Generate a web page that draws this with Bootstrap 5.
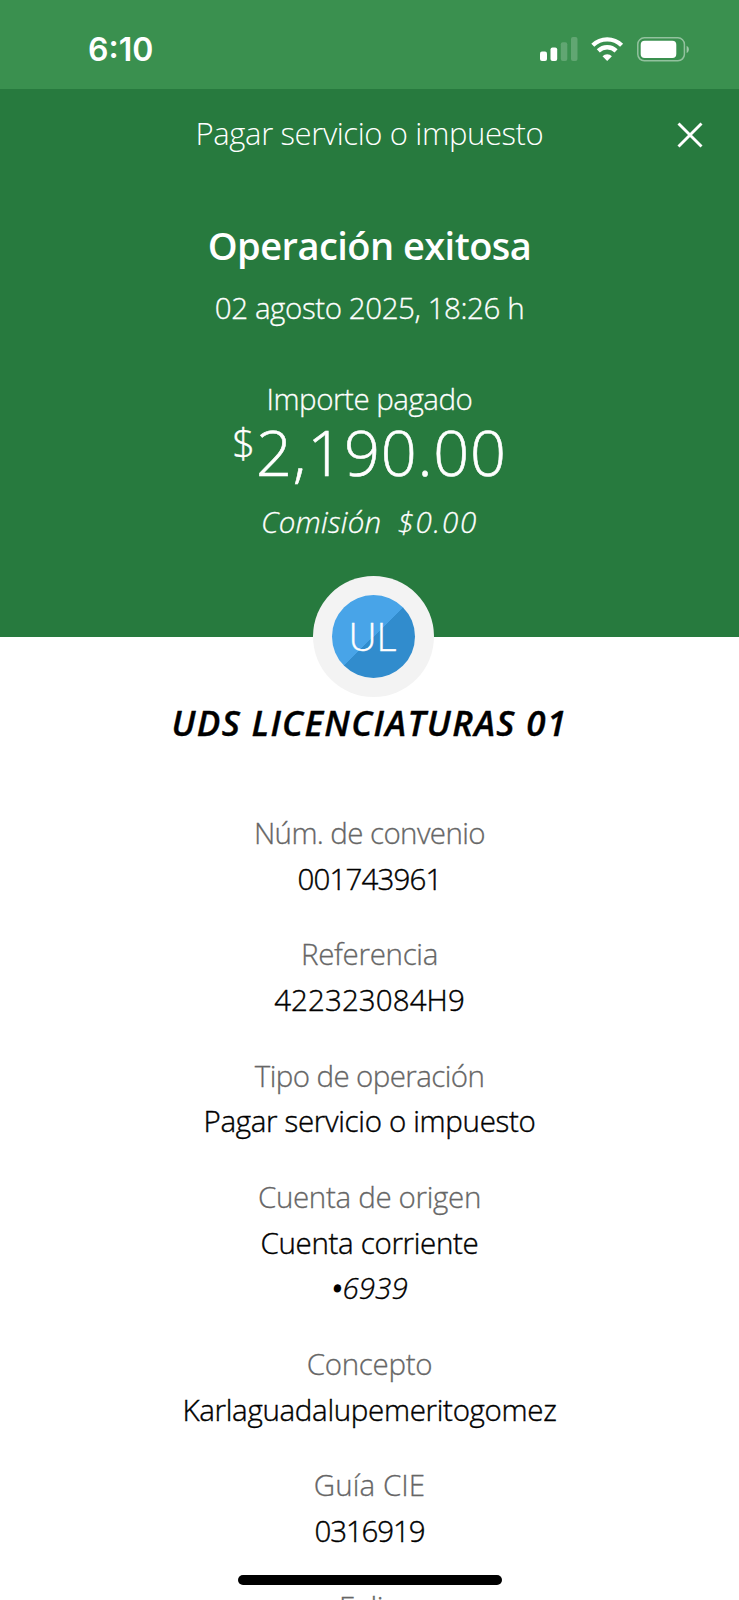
<!DOCTYPE html>
<html lang="es">
<head>
<meta charset="utf-8">
<meta name="viewport" content="width=device-width, initial-scale=1">
<title>Operación exitosa</title>
<link rel="stylesheet" href="https://cdn.jsdelivr.net/npm/bootstrap@5.3.0/dist/css/bootstrap.min.css">
<style>
  body { font-family: "Open Sans", sans-serif; font-weight: 300; font-size: 29.5px; color: #000; background: #fff; }
  .screen { height: 1600px; }
  .status-bar { height: 89px; background: #3a904f; padding: 0 50px 0 88px; }
  .clock { font: 600 32px/1 "Inter", sans-serif; letter-spacing: 0; padding-top: 34px; }
  .status-icons { padding-top: 36px; }
  .hero { height: 548px; background: #277a3e; }
  .title-bar { height: 87px; font-size: 31px; letter-spacing: -.38px; padding-top: 1px; }
  .close-btn { right: 35px; top: 32px; }
  .headline { font-size: 38px; font-weight: 600; line-height: 50px; letter-spacing: -.54px; margin-top: 44px; }
  .line { line-height: 46px; -webkit-text-stroke: .3px #fff; }
  .stamp { letter-spacing: -.42px; margin-top: 15px; }
  .caption-paid { letter-spacing: -.48px; margin-top: 45px; }
  .amount { font-size: 63px; line-height: 60px; letter-spacing: .81px; -webkit-text-stroke: .6px #fff; }
  .amount .currency { font-size: 40px; line-height: 40px; margin: 1px 1px 0 0; letter-spacing: 0; -webkit-text-stroke: .4px #fff; }
  .fee { margin-top: 17px; gap: 16px; letter-spacing: .25px; }
  .fee-value { letter-spacing: 1.8px; }
  .avatar { left: 313px; top: 576px; width: 121px; height: 121px; background: #f3f3f3; }
  .avatar-disc { width: 83px; height: 83px; font-size: 39px; line-height: 1; padding: 0 2px 2px 0; background: linear-gradient(136deg, #48a4e8 50%, #318ccd 50%); -webkit-text-stroke: .4px #fff; }
  .payee { font-size: 35px; font-weight: 600; line-height: 50px; letter-spacing: 1.36px; margin-top: 61px; -webkit-text-stroke: .4px #000; }
  .details { margin-top: 62px; line-height: 45.5px; letter-spacing: -.32px; }
  .details > div { margin-bottom: 30.4px; }
  .details dt { font-weight: 300; color: #666; -webkit-text-stroke: .3px #666; }
  .details dd { -webkit-text-stroke: .4px #000; }
  .details .tight { letter-spacing: -.6px; }
  .details .digits { letter-spacing: -.85px; }
  .details .tighter { letter-spacing: -1.1px; }
  .details .even { letter-spacing: .1px; }
  .details .account { -webkit-text-stroke: .3px #000; }
  .mask-dot { -webkit-text-stroke: 3px #000; }
  .home-bar { left: 238px; top: 1575px; width: 264px; height: 10px; background: #000; }
</style>
</head>
<body>
<div class="screen position-relative overflow-hidden">
  <header class="status-bar d-flex justify-content-between align-items-start text-white">
    <span class="clock">6:10</span>
    <svg class="status-icons" width="151" height="63" viewBox="538 0 151 27" fill="#fff" aria-hidden="true">
      <rect x="540" y="15.5" width="7" height="9.5" rx="2"/>
      <rect x="550.5" y="11.5" width="6.700" height="13.500" rx="2"/>
      <rect x="560.8" y="6.200" width="6.500" height="18.800" rx="2" opacity=".2"/>
      <rect x="571" y="1" width="6.500" height="24" rx="2" opacity=".2"/>
      <g fill="none" stroke="#fff" stroke-width="4.300">
        <path d="M592.800 9.300a20.500 20.500 0 0 1 28.800 0"/>
        <path d="M598.300 14.900a12.700 12.700 0 0 1 17.800 0"/>
      </g>
      <path d="M607.200 25l-4.700-4.800a6.800 6.800 0 0 1 9.400 0z"/>
      <rect x="637.800" y="1.800" width="46.600" height="23" rx="6.500" fill="none" stroke="#fff" stroke-width="1.500" opacity=".45"/>
      <rect x="640.700" y="4.700" width="35.600" height="17.200" rx="4"/>
      <path d="M686.600 9.800c3 1.300 3 5.900 0 7.200z" opacity=".5"/>
    </svg>
  </header>

  <section class="hero text-white text-center">
    <div class="title-bar d-flex justify-content-center align-items-center position-relative">
      <span>Pagar servicio o impuesto</span>
      <button type="button" class="close-btn btn p-0 border-0 position-absolute lh-1 d-flex" aria-label="Cerrar">
        <svg width="28" height="28" viewBox="0 0 28 28" fill="none" stroke="#fff" stroke-width="2.900"><path d="M2.500 2.500l23 23M25.500 2.500l-23 23"/></svg>
      </button>
    </div>
    <h1 class="headline mb-0">Operación exitosa</h1>
    <div class="line stamp">02 agosto 2025, 18:26 h</div>
    <div class="line caption-paid">Importe pagado</div>
    <div class="amount d-flex justify-content-center align-items-start"><span class="currency">$</span><span>2,190.00</span></div>
    <div class="line fee d-flex justify-content-center fst-italic"><span>Comisión</span><span class="fee-value">$0.00</span></div>
  </section>

  <div class="avatar position-absolute rounded-circle d-flex justify-content-center align-items-center">
    <div class="avatar-disc rounded-circle d-flex justify-content-center align-items-center text-white">UL</div>
  </div>

  <main class="text-center">
    <h2 class="payee fst-italic mb-0">UDS LICENCIATURAS 01</h2>
    <dl class="details mb-0">
      <div><dt class="tight">Núm. de convenio</dt><dd class="mb-0 digits">001743961</dd></div>
      <div><dt>Referencia</dt><dd class="mb-0 even">422323084H9</dd></div>
      <div><dt class="tight">Tipo de operación</dt><dd class="mb-0">Pagar servicio o impuesto</dd></div>
      <div><dt>Cuenta de origen</dt><dd class="mb-0">Cuenta corriente</dd><dd class="mb-0 fst-italic even account"><span class="mask-dot">•</span>6939</dd></div>
      <div><dt>Concepto</dt><dd class="mb-0">Karlaguadalupemeritogomez</dd></div>
      <div><dt class="even">Guía CIE</dt><dd class="mb-0 tighter">0316919</dd></div>
      <div><dt>Folio</dt></div>
    </dl>
  </main>
  <div class="home-bar position-absolute rounded-pill"></div>
</div>
<script src="https://cdn.jsdelivr.net/npm/bootstrap@5.3.0/dist/js/bootstrap.bundle.min.js"></script>
</body>
</html>
